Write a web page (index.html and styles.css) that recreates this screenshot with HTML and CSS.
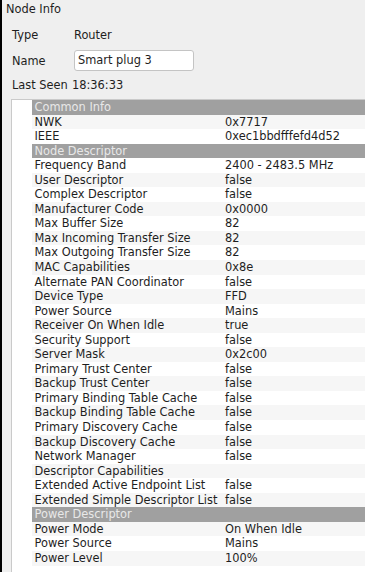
FILE: index.html
```html
<!DOCTYPE html>
<html>
<head>
<meta charset="utf-8">
<link rel="stylesheet" href="styles.css">
</head>
<body>
<div class="panel">
  <div class="title">Node Info</div>
  <div class="form">
    <div class="lbl">Type</div><div class="val">Router</div>
    <div class="lbl">Name</div><div class="val"><div class="input">Smart plug 3</div></div>
    <div class="lbl">Last Seen</div><div class="val seen">18:36:33</div>
  </div>
  <div class="tree">
    <div class="row hdr"><span class="br"></span><span class="c1">Common Info</span><span class="c2"></span></div>
    <div class="row alt"><span class="br"></span><span class="c1">NWK</span><span class="c2">0x7717</span></div>
    <div class="row"><span class="br"></span><span class="c1">IEEE</span><span class="c2">0xec1bbdfffefd4d52</span></div>
    <div class="row hdr"><span class="br"></span><span class="c1">Node Descriptor</span><span class="c2"></span></div>
    <div class="row"><span class="br"></span><span class="c1">Frequency Band</span><span class="c2">2400 - 2483.5 MHz</span></div>
    <div class="row alt"><span class="br"></span><span class="c1">User Descriptor</span><span class="c2">false</span></div>
    <div class="row"><span class="br"></span><span class="c1">Complex Descriptor</span><span class="c2">false</span></div>
    <div class="row alt"><span class="br"></span><span class="c1">Manufacturer Code</span><span class="c2">0x0000</span></div>
    <div class="row"><span class="br"></span><span class="c1">Max Buffer Size</span><span class="c2">82</span></div>
    <div class="row alt"><span class="br"></span><span class="c1">Max Incoming Transfer Size</span><span class="c2">82</span></div>
    <div class="row"><span class="br"></span><span class="c1">Max Outgoing Transfer Size</span><span class="c2">82</span></div>
    <div class="row alt"><span class="br"></span><span class="c1">MAC Capabilities</span><span class="c2">0x8e</span></div>
    <div class="row"><span class="br"></span><span class="c1">Alternate PAN Coordinator</span><span class="c2">false</span></div>
    <div class="row alt"><span class="br"></span><span class="c1">Device Type</span><span class="c2">FFD</span></div>
    <div class="row"><span class="br"></span><span class="c1">Power Source</span><span class="c2">Mains</span></div>
    <div class="row alt"><span class="br"></span><span class="c1">Receiver On When Idle</span><span class="c2">true</span></div>
    <div class="row"><span class="br"></span><span class="c1">Security Support</span><span class="c2">false</span></div>
    <div class="row alt"><span class="br"></span><span class="c1">Server Mask</span><span class="c2">0x2c00</span></div>
    <div class="row"><span class="br"></span><span class="c1">Primary Trust Center</span><span class="c2">false</span></div>
    <div class="row alt"><span class="br"></span><span class="c1">Backup Trust Center</span><span class="c2">false</span></div>
    <div class="row"><span class="br"></span><span class="c1">Primary Binding Table Cache</span><span class="c2">false</span></div>
    <div class="row alt"><span class="br"></span><span class="c1">Backup Binding Table Cache</span><span class="c2">false</span></div>
    <div class="row"><span class="br"></span><span class="c1">Primary Discovery Cache</span><span class="c2">false</span></div>
    <div class="row alt"><span class="br"></span><span class="c1">Backup Discovery Cache</span><span class="c2">false</span></div>
    <div class="row"><span class="br"></span><span class="c1">Network Manager</span><span class="c2">false</span></div>
    <div class="row alt"><span class="br"></span><span class="c1">Descriptor Capabilities</span><span class="c2"></span></div>
    <div class="row"><span class="br"></span><span class="c1">Extended Active Endpoint List</span><span class="c2">false</span></div>
    <div class="row alt"><span class="br"></span><span class="c1">Extended Simple Descriptor List</span><span class="c2">false</span></div>
    <div class="row hdr"><span class="br"></span><span class="c1">Power Descriptor</span><span class="c2"></span></div>
    <div class="row alt"><span class="br"></span><span class="c1">Power Mode</span><span class="c2">On When Idle</span></div>
    <div class="row"><span class="br"></span><span class="c1">Power Source</span><span class="c2">Mains</span></div>
    <div class="row alt"><span class="br"></span><span class="c1">Power Level</span><span class="c2">100%</span></div>
  </div>
</div>
</body>
</html>
```
FILE: styles.css
```css
html, body {
  margin: 0;
  padding: 0;
  background: #efefef;
  overflow: hidden;
}
.panel {
  height: 572px;
  border-left: 2px solid #000;
  box-sizing: border-box;
  font-family: "DejaVu Sans", sans-serif;
  font-size: 11.4px;
  color: #1e1e1e;
  display: flex;
  flex-direction: column;
}
.title {
  height: 19px;
  line-height: 19px;
  padding-left: 4px;
}
.form {
  display: grid;
  grid-template-columns: 62px 1fr;
  grid-template-rows: 18px 21px 18px;
  row-gap: 6px;
  padding: 7px 0 0 10px;
  margin-bottom: 4px;
  align-items: center;
}
.form .lbl:nth-of-type(5) { }
.form > :nth-child(5), .form > :nth-child(6) { margin-top: -2px; }
.seen { margin-left: -2px; }
.input {
  width: 120px;
  height: 21px;
  box-sizing: border-box;
  background: #fff;
  border: 1px solid #c4c4c4;
  border-radius: 3px;
  line-height: 19px;
  padding-left: 3px;
}
.tree {
  margin-left: 9px;
  flex: 1;
  background: #fff;
  border: 1px solid #cacaca;
  border-right: none;
  border-bottom: none;
}
.row {
  display: grid;
  grid-template-columns: 20px 191px 1fr;
  height: 14.56px;
  line-height: 14.56px;
  white-space: nowrap;
}
.row.alt { background: #f6f6f6; }
.row .br { background: #fff; }
.c1 { padding-left: 2.5px; }
.c2 { padding-left: 2px; }
.hdr .c1, .hdr .c2 {
  background: #a0a0a0;
  color: #e8e8e8;
}
```
